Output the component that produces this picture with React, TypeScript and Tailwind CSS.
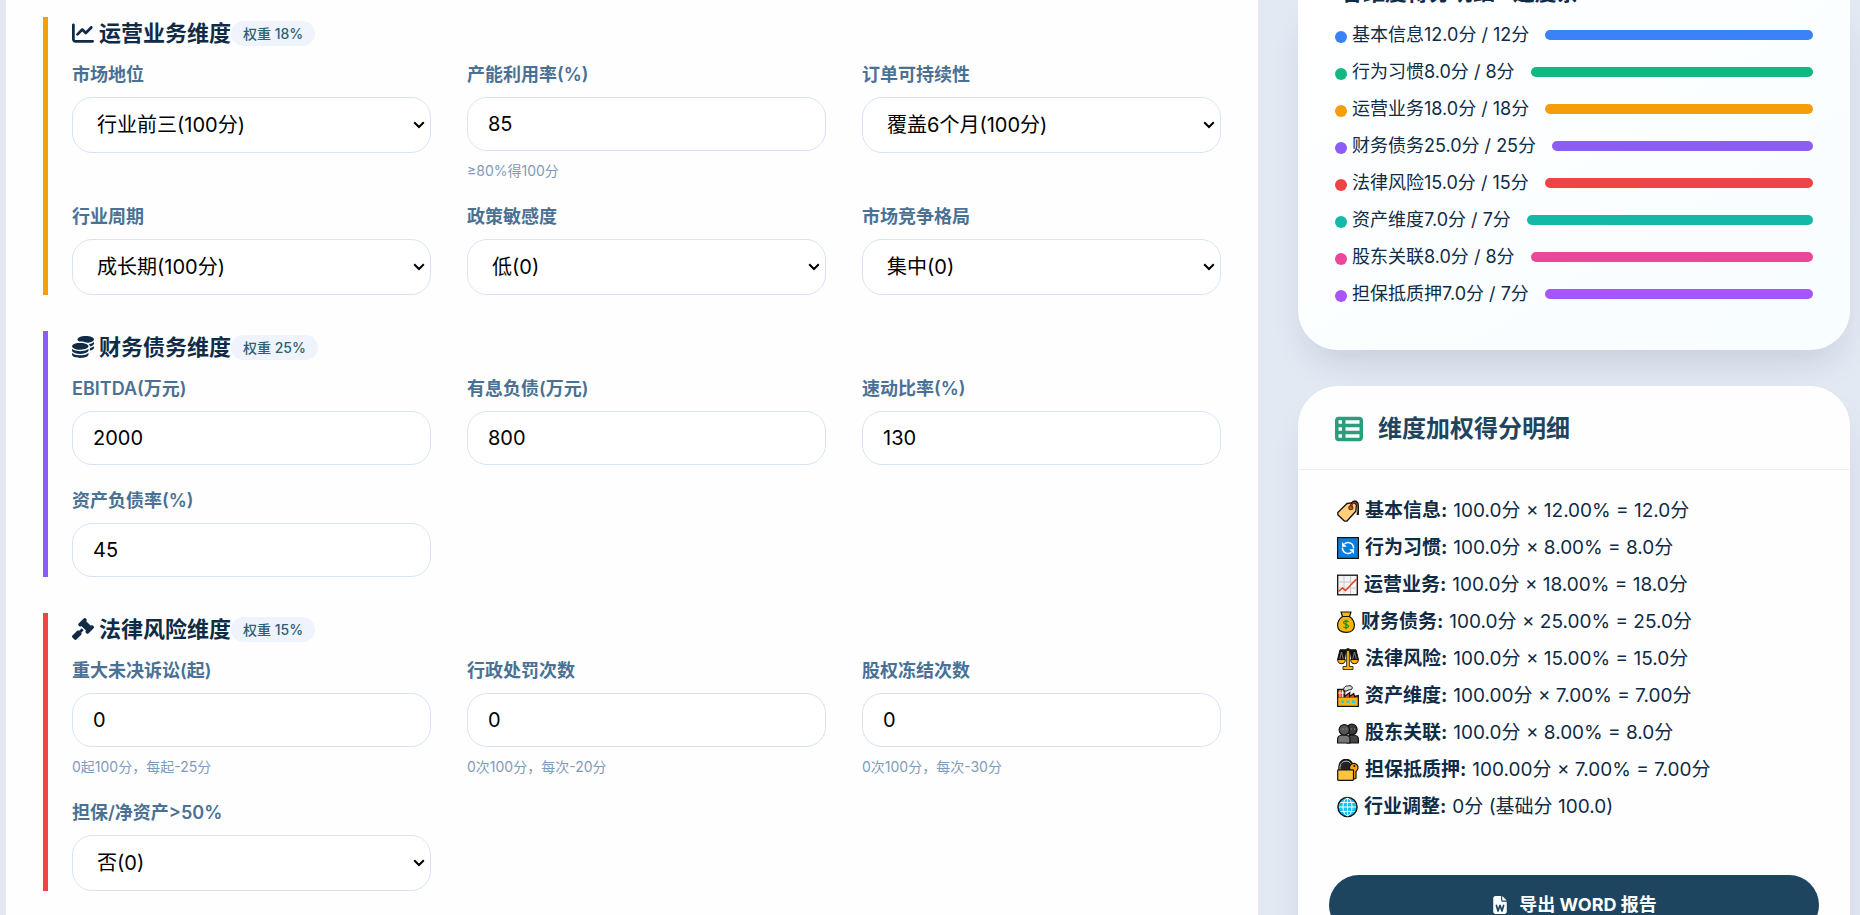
import { useState } from "react";
import type { ReactNode } from "react";
import { FaChartLine, FaCoins, FaFileWord, FaGavel, FaTableList } from "react-icons/fa6";

type Field = {
  id: string;
  label: string;
  type: "select" | "input";
  value: string;
  hint?: string;
};

type Section = {
  title: string;
  weight: string;
  border: string;
  icon: ReactNode;
  fields: Field[];
};

const sections: Section[] = [
  {
    title: "运营业务维度",
    weight: "权重 18%",
    border: "border-[#f59e0b]",
    icon: <FaChartLine />,
    fields: [
      { id: "market", label: "市场地位", type: "select", value: "行业前三(100分)" },
      { id: "capacity", label: "产能利用率(%)", type: "input", value: "85", hint: "≥80%得100分" },
      { id: "orders", label: "订单可持续性", type: "select", value: "覆盖6个月(100分)" },
      { id: "cycle", label: "行业周期", type: "select", value: "成长期(100分)" },
      { id: "policy", label: "政策敏感度", type: "select", value: "低(0)" },
      { id: "competition", label: "市场竞争格局", type: "select", value: "集中(0)" },
    ],
  },
  {
    title: "财务债务维度",
    weight: "权重 25%",
    border: "border-[#8b5cf6]",
    icon: <FaCoins />,
    fields: [
      { id: "ebitda", label: "EBITDA(万元)", type: "input", value: "2000" },
      { id: "debt", label: "有息负债(万元)", type: "input", value: "800" },
      { id: "quick", label: "速动比率(%)", type: "input", value: "130" },
      { id: "leverage", label: "资产负债率(%)", type: "input", value: "45" },
    ],
  },
  {
    title: "法律风险维度",
    weight: "权重 15%",
    border: "border-[#ef4444]",
    icon: <FaGavel />,
    fields: [
      { id: "lawsuit", label: "重大未决诉讼(起)", type: "input", value: "0", hint: "0起100分，每起-25分" },
      { id: "penalty", label: "行政处罚次数", type: "input", value: "0", hint: "0次100分，每次-20分" },
      { id: "freeze", label: "股权冻结次数", type: "input", value: "0", hint: "0次100分，每次-30分" },
      { id: "guarantee", label: "担保/净资产>50%", type: "select", value: "否(0)" },
    ],
  },
];

const bars = [
  { text: "基本信息12.0分 / 12分", color: "bg-[#3b82f6]" },
  { text: "行为习惯8.0分 / 8分", color: "bg-[#10b981]" },
  { text: "运营业务18.0分 / 18分", color: "bg-[#f59e0b]" },
  { text: "财务债务25.0分 / 25分", color: "bg-[#8b5cf6]" },
  { text: "法律风险15.0分 / 15分", color: "bg-[#ef4444]" },
  { text: "资产维度7.0分 / 7分", color: "bg-[#14b8a6]" },
  { text: "股东关联8.0分 / 8分", color: "bg-[#ec4899]" },
  { text: "担保抵质押7.0分 / 7分", color: "bg-[#a855f7]" },
];

function TagIcon() {
  return (
    <svg viewBox="0 0 22 22" className="size-[22px]" stroke="#111" strokeWidth="1.3" strokeLinejoin="round">
      <path d="M.8 12.5 10 3.500l7-.9 2.400 2.200-.6 6.500L9.800 21.200H7.600L.8 14.800Z" fill="#ffce7a" />
      <path d="M14 7.500C14 2 18-.2 20.300 3c1 2.500.8 7 .4 12" fill="none" stroke="#111" strokeWidth="2.200" />
      <path d="M14 7.500C14 2.500 18 .8 19.800 3.500c1 2.500.8 6 .6 9" fill="none" stroke="#e03a1a" strokeWidth="1" />
      <circle cx="13.800" cy="7.800" r="1.900" fill="#d9601a" stroke="#7a2a00" />
    </svg>
  );
}

function CycleIcon() {
  return (
    <svg viewBox="0 0 22 22" className="size-[22px]">
      <rect x=".6" y=".6" width="20.800" height="20.800" fill="#0b7ddb" stroke="#111" strokeWidth="1.200" />
      <path d="M7.500 6.800a5.500 5.500 0 0 1 9 4.700M14.500 15.200a5.500 5.500 0 0 1-9-4.700" fill="none" stroke="#fff" strokeWidth="1.500" />
      <path d="M5 5v4.800h4.800ZM17 17v-4.800h-4.800Z" fill="#fff" />
    </svg>
  );
}

function TrendIcon() {
  return (
    <svg viewBox="0 0 21 22" className="h-[22px] w-[21px]">
      <rect x=".7" y="1.200" width="19.600" height="19.600" fill="#f4f4f4" stroke="#111" strokeWidth="1.300" />
      <path d="M7 2v18M13.500 2v18M1.500 8h18M1.500 14h18" stroke="#c9c9c9" />
      <path d="m1.500 17.500 4-3.500 3 2.500L19.500 5" fill="none" stroke="#f03a17" strokeWidth="1.500" />
    </svg>
  );
}

function MoneyBagIcon() {
  return (
    <svg viewBox="0 0 18 22" className="h-[22px] w-[18px]">
      <path d="M4 1h10l-1.500 4.500C16 8 17.400 11 17.400 14.500c0 4-3 6.900-8.400 6.900S.6 18.500.6 14.500C.6 11 2 8 5.500 5.500Z" fill="#fbb70c" stroke="#111" strokeWidth="1.200" strokeLinejoin="round" />
      <path d="M5 5.500h8" stroke="#111" />
      <path d="M11.500 10.800c-1-1.200-5-1.200-5 .9s5 1.300 5 3.400-4 2.100-5.200.8M9 8.800v9.400" fill="none" stroke="#0a9a2a" strokeWidth="1.300" />
    </svg>
  );
}

function ScalesIcon() {
  return (
    <svg viewBox="0 0 22 22" className="size-[22px]" stroke="#111" strokeLinejoin="round">
      <path d="M3 1.800h6l.8-1h2.400l.8 1h6l2.500 10h-7l-1-7h-5l-1 7h-7Z" fill="#111" />
      <path d="M4.500 4 2.800 11M4.500 4l1.800 7M17.500 4l-1.800 7M17.500 4l1.800 7" fill="none" stroke="#999" strokeWidth=".8" />
      <path d="M.7 11.500h7.600c0 3-1.600 4.200-3.800 4.200S.7 14.500.7 11.500ZM13.700 11.500h7.600c0 3-1.600 4.200-3.800 4.200s-3.800-1.200-3.800-4.200Z" fill="#fbb70c" />
      <path d="M9.600 2.500h2.800v16H16v3H6v-3h3.600Z" fill="#fbb70c" strokeWidth=".8" />
    </svg>
  );
}

function FactoryIcon() {
  return (
    <svg viewBox="0 0 22 22" className="size-[22px]">
      <path d="M.7 21.300V4.500h7v7l5-4v4l4-3 .8 3 3.800-1v10.800Z" fill="#f0411e" stroke="#111" strokeWidth="1.300" />
      <path d="M3 5v7M5.500 5v7M1 8h6.500" stroke="#fff" strokeWidth=".8" />
      <path d="M1.400 13h19.200v7.600H1.400Z" fill="#fbb70c" />
      <path d="M4 15.500h3v2.500H4ZM9.500 15.500h3v2.500h-3ZM15 15.500h3v2.500h-3Z" fill="#2cc9f0" />
      <path d="M7 6C6 3 8 .8 10.500 1c4-1 5.500 1 4.500 3-1.500 1.500-4 0-5 2Z" fill="#ddd" stroke="#111" />
    </svg>
  );
}

function PeopleIcon() {
  return (
    <svg viewBox="0 0 22 22" className="size-[22px]" stroke="#111" strokeWidth="1.200">
      <path d="M10 21v-4c0-3 2-4 5-4s6.400 1 6.400 4v4Z" fill="#444" />
      <circle cx="14.800" cy="7.500" r="5.300" fill="#3a3a3a" />
      <path d="M.6 21v-4c0-3 3-4 6-4s6.400 1 6.400 4v4Z" fill="#777" />
      <circle cx="7.300" cy="7.800" r="5.200" fill="#555" />
      <path d="M5.500 7h.8M8.700 7h.8M13.800 7h.8M17 7h.8" stroke="#bbb" />
    </svg>
  );
}

function LockIcon() {
  return (
    <svg viewBox="0 0 22 22" className="size-[22px]" strokeLinejoin="round">
      <path d="M2.500 11V8.500c0-10 13-10 13 0V11" fill="#222" stroke="#111" strokeWidth="2.600" />
      <path d="M3 10.500v-2c0-8.500 12-8.500 12 0" fill="none" stroke="#ccc" strokeWidth="1" />
      <path d="M13.500 11.500a4.300 4.300 0 1 1 5.500.8v7l-3 1.200-2-2Z" fill="#f7a40c" stroke="#111" strokeWidth="1.200" />
      <rect x=".7" y="10.800" width="15.800" height="10.500" rx=".8" fill="#ffc43d" stroke="#111" strokeWidth="1.200" />
      <circle cx="17.300" cy="7" r="1" fill="#111" />
    </svg>
  );
}

function GlobeIcon() {
  return (
    <svg viewBox="0 0 21 22" className="h-[22px] w-[21px]" fill="none">
      <circle cx="10.500" cy="11" r="9.600" fill="#19c0f5" stroke="#111" strokeWidth="1.400" />
      <path d="M10.500 2v18M2 11h17M3.500 6.500h14M3.500 15.500h14" stroke="#fff" />
      <ellipse cx="10.500" cy="11" rx="4.500" ry="8.800" stroke="#fff" />
    </svg>
  );
}

const details = [
  { icon: <TagIcon />, name: "基本信息:", text: "100.0分 × 12.00% = 12.0分" },
  { icon: <CycleIcon />, name: "行为习惯:", text: "100.0分 × 8.00% = 8.0分" },
  { icon: <TrendIcon />, name: "运营业务:", text: "100.0分 × 18.00% = 18.0分" },
  { icon: <MoneyBagIcon />, name: "财务债务:", text: "100.0分 × 25.00% = 25.0分" },
  { icon: <ScalesIcon />, name: "法律风险:", text: "100.0分 × 15.00% = 15.0分" },
  { icon: <FactoryIcon />, name: "资产维度:", text: "100.00分 × 7.00% = 7.00分" },
  { icon: <PeopleIcon />, name: "股东关联:", text: "100.0分 × 8.00% = 8.0分" },
  { icon: <LockIcon />, name: "担保抵质押:", text: "100.00分 × 7.00% = 7.00分" },
  { icon: <GlobeIcon />, name: "行业调整:", text: "0分 (基础分 100.0)" },
];

function FormField({ field }: { field: Field }) {
  const [value, setValue] = useState(field.value);

  return (
    <div className="flex flex-col">
      <label htmlFor={field.id} className="mb-2 text-lg leading-7 font-semibold text-[#4a7194]">
        {field.label}
      </label>
      {field.type === "select" ? (
        <div className="relative">
          <select
            id={field.id}
            value={value}
            onChange={(e) => setValue(e.target.value)}
            className="h-14 w-full appearance-none rounded-[20px] border border-[#d6e5f5] bg-white px-6 text-xl text-black"
          >
            <option>{field.value}</option>
          </select>
          <svg
            viewBox="0 0 12 8"
            className="pointer-events-none absolute top-6 right-[6px] h-2 w-3"
            fill="none"
            stroke="#000"
            strokeWidth="2"
          >
            <path d="m1.200 1.300 4.800 4.700 4.800-4.700" />
          </svg>
        </div>
      ) : (
        <input
          id={field.id}
          value={value}
          onChange={(e) => setValue(e.target.value)}
          className="h-[54px] w-full rounded-[20px] border border-[#d6e5f5] bg-white px-5 text-xl text-black"
        />
      )}
      {field.hint && <p className="mt-[10px] text-sm leading-5 text-[#7f9bbc]">{field.hint}</p>}
    </div>
  );
}

export default function App() {
  return (
    <div className="flex h-screen items-start gap-10 overflow-hidden bg-[#e3e9f3] pr-[10px] pl-[6px] font-['Inter','Noto_Sans_CJK_SC',sans-serif] text-[#0f2b46]">
      {/* Formulario */}
      <main className="min-h-screen flex-1 border-x border-white bg-[#fefefe] px-9 pt-[17px] pb-9">
        <div className="flex flex-col gap-9">
          {sections.map((section) => (
            <section key={section.title} className={`border-l-5 pl-6 ${section.border}`}>
              <div className="mb-3 flex items-center text-[22px] leading-8">
                {section.icon}
                <h3 className="ml-[5px] font-bold">{section.title}</h3>
                <span className="rounded-full bg-[#eef3fc] px-3 text-sm leading-[25px] font-medium text-[#2c5f73]">
                  {section.weight}
                </span>
              </div>
              <div className="grid grid-cols-3 gap-x-9 gap-y-[22px]">
                {section.fields.map((field) => (
                  <FormField key={field.id} field={field} />
                ))}
              </div>
            </section>
          ))}
        </div>
      </main>

      <aside className="flex w-[552px] flex-col gap-9">
        <div className="rounded-b-[40px] border-x border-white bg-gradient-to-br from-white to-[#f8fdff] px-9 pb-[33px] shadow-[0_20px_36px_-12px_rgba(15,43,70,0.16)]">
          <h4 className="-mt-[22px] mb-[15px] px-[6px] text-[22px] leading-7 font-bold">各维度得分明细 · 进度条</h4>
          <ul>
            {bars.map((bar) => (
              <li key={bar.text} className="mb-[10px] flex items-center">
                <span className={`mt-1 size-3 rounded-full ${bar.color}`} />
                <span className="ml-[5px] text-lg leading-[27px]">{bar.text}</span>
                <span className={`ml-4 h-[10px] flex-1 rounded-full ${bar.color}`} />
              </li>
            ))}
          </ul>
        </div>

        <div className="rounded-t-[40px] border border-white bg-[#fefefe] shadow-[0_20px_36px_-12px_rgba(15,43,70,0.16)]">
          <div className="flex items-center gap-[15px] border-b border-[#e8ecef] px-9 pt-6 pb-[22px]">
            <FaTableList className="text-[28px] text-[#2a9d7c]" />
            <h2 className="text-2xl leading-9 font-bold text-[#1e4560]">维度加权得分明细</h2>
          </div>
          <div className="px-[30px] pt-[22px] pb-8">
            <ul className="px-2 text-[19px] leading-[37px]">
              {details.map((item) => (
                <li key={item.name} className="flex items-center">
                  {item.icon}
                  <strong className="ml-[6px] font-bold">{item.name}</strong>
                  <span className="ml-[6px]">{item.text}</span>
                </li>
              ))}
            </ul>
            <button className="mt-[50px] flex h-[60px] w-full items-center justify-center gap-[10px] rounded-full bg-[#1e4560] text-lg font-bold text-white">
              <FaFileWord />
              导出 WORD 报告
            </button>
          </div>
        </div>
      </aside>
    </div>
  );
}
